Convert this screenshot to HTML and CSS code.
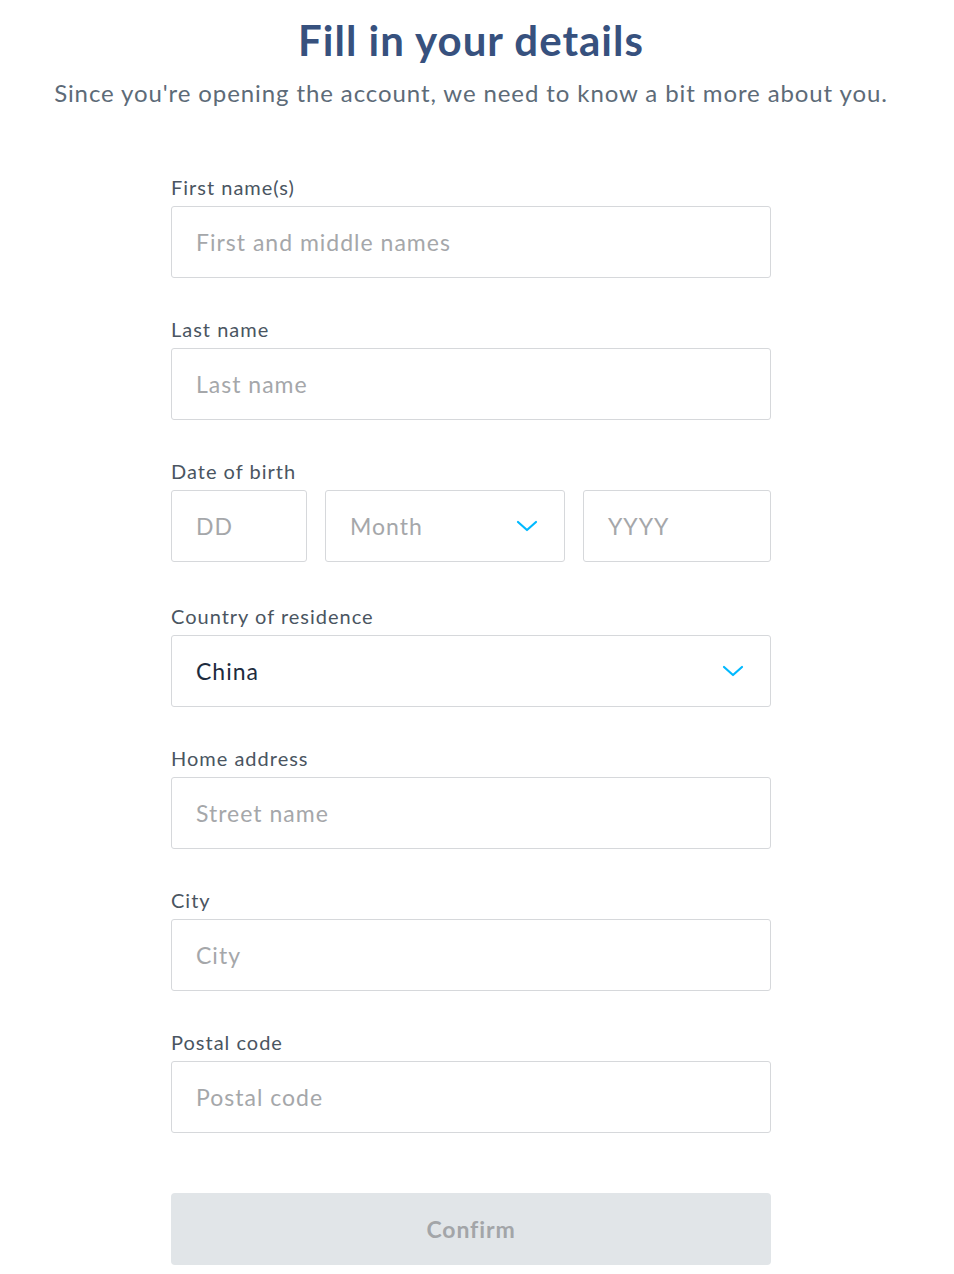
FILE: index.html
```html
<!DOCTYPE html>
<html lang="en">
<head>
<meta charset="utf-8">
<title>Fill in your details</title>
<link rel="stylesheet" href="styles.css">
</head>
<body>
<div class="page">
  <header class="intro">
    <h1 class="title">Fill in your details</h1>
    <p class="subtitle">Since you're opening the account, we need to know a bit more about you.</p>
  </header>
  <form class="form">
    <div class="field">
      <label class="label">First name(s)</label>
      <div class="input placeholder">First and middle names</div>
    </div>
    <div class="field">
      <label class="label">Last name</label>
      <div class="input placeholder">Last name</div>
    </div>
    <div class="field field-dob">
      <label class="label">Date of birth</label>
      <div class="dob-row">
        <div class="input placeholder dd">DD</div>
        <div class="input placeholder select month">Month
          <svg class="chev" width="22" height="12" viewBox="0 0 22 12"><path d="M2 2 L11 10 L20 2" fill="none" stroke="#00b9ff" stroke-width="2.2" stroke-linecap="round" stroke-linejoin="round"/></svg>
        </div>
        <div class="input placeholder yyyy">YYYY</div>
      </div>
    </div>
    <div class="field">
      <label class="label">Country of residence</label>
      <div class="input select value">China
        <svg class="chev" width="22" height="12" viewBox="0 0 22 12"><path d="M2 2 L11 10 L20 2" fill="none" stroke="#00b9ff" stroke-width="2.2" stroke-linecap="round" stroke-linejoin="round"/></svg>
      </div>
    </div>
    <div class="field">
      <label class="label">Home address</label>
      <div class="input placeholder">Street name</div>
    </div>
    <div class="field">
      <label class="label">City</label>
      <div class="input placeholder">City</div>
    </div>
    <div class="field">
      <label class="label">Postal code</label>
      <div class="input placeholder">Postal code</div>
    </div>
    <button class="confirm" type="button">Confirm</button>
  </form>
</div>
</body>
</html>
```

FILE: styles.css
```css
html, body {
  margin: 0;
  padding: 0;
  background: #ffffff;
}
body {
  font-family: Lato, "Open Sans", sans-serif;
}
.page {
  width: 942px;
  display: flex;
  flex-direction: column;
  align-items: center;
}
.intro {
  text-align: center;
  padding-top: 14px;
}
.title {
  margin: 0;
  font-size: 42px;
  line-height: 52px;
  font-weight: 700;
  color: #37517e;
  letter-spacing: 1px;
}
.subtitle {
  margin: 12px 0 0 0;
  font-size: 24px;
  line-height: 30px;
  color: #5d6b78;
  letter-spacing: 0.9px;
}
.form {
  width: 600px;
  margin-top: 68px;
  display: flex;
  flex-direction: column;
  gap: 40px;
}
.field {
  display: flex;
  flex-direction: column;
  gap: 8px;
}
.field-dob {
  margin-bottom: 3px;
}
.label {
  font-size: 20px;
  line-height: 22px;
  color: #4a5561;
  letter-spacing: 1px;
}
.input {
  box-sizing: border-box;
  height: 72px;
  border: 1px solid #d6d8db;
  border-radius: 3px;
  padding: 0 24px;
  display: flex;
  align-items: center;
  font-size: 23px;
  letter-spacing: 1px;
}
.placeholder {
  color: #a5a7aa;
}
.value {
  color: #1d2b3e;
}
.select {
  justify-content: space-between;
}
.chev {
  margin-right: 2px;
}
.dob-row {
  display: flex;
  gap: 18px;
}
.dd { width: 136px; }
.month { width: 240px; }
.yyyy { width: 188px; }
.confirm {
  margin-top: 20px;
  height: 72px;
  border: none;
  border-radius: 4px;
  background: #e1e5e8;
  color: #a3a5a8;
  font-family: Lato, "Open Sans", sans-serif;
  font-size: 23px;
  font-weight: 700;
  letter-spacing: 0.9px;
}
```
